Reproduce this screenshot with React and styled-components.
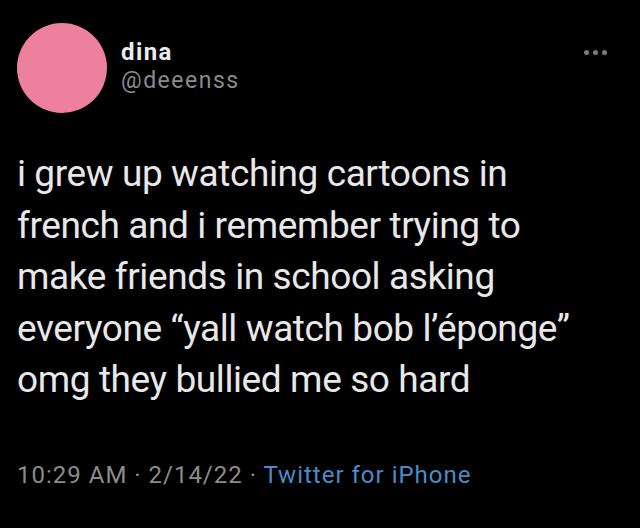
import styled, { createGlobalStyle } from 'styled-components';

const Global = createGlobalStyle`
    html, body {
        margin: 0;
        padding: 0;
        background: #000;
    }
`;

const Tweet = styled.article`
    width: 640px;
    height: 528px;
    box-sizing: border-box;
    background-color: #000;
    padding: 23px 24px 0 17px;
    font-family: Roboto, "Liberation Sans", sans-serif;
    color: #e6e6e6;
`;

const Header = styled.header`
    display: flex;
    align-items: flex-start;
`;

const Avatar = styled.div`
    width: 90px;
    height: 90px;
    border-radius: 50%;
    background-color: #ee809f;
    flex-shrink: 0;
`;

const Names = styled.div`
    display: flex;
    flex-direction: column;
    margin-left: 14px;
    padding-top: 16px;
    flex: 1;
`;

const Name = styled.div`
    font-size: 24px;
    font-weight: 700;
    line-height: 27px;
    letter-spacing: 1.4px;
    color: #ececec;
`;

const Handle = styled.div`
    font-size: 23px;
    line-height: 30px;
    letter-spacing: 1.5px;
    color: #8b8b8b;
`;

const More = styled.div`
    display: flex;
    gap: 4px;
    padding-top: 27px;
    padding-right: 9px;
`;

const Dot = styled.span`
    width: 5px;
    height: 5px;
    border-radius: 50%;
    background-color: #7a7a7a;
`;

const Body = styled.p`
    margin: 35px 0 0;
    font-size: 37px;
    line-height: 51.5px;
    letter-spacing: -0.4px;
    color: #e8e8e8;
`;

const Meta = styled.footer`
    margin-top: 55px;
    font-size: 24px;
    letter-spacing: 1px;
    color: #8b8b8b;
`;

const Source = styled.span`
    color: #4a8cc9;
`;

export default function App() {
    return (
        <>
            <Global />
            <Tweet>
                <Header>
                    <Avatar />
                    <Names>
                        <Name>dina</Name>
                        <Handle>@deeenss</Handle>
                    </Names>
                    <More>
                        <Dot />
                        <Dot />
                        <Dot />
                    </More>
                </Header>
                <Body>
                    i grew up watching cartoons in<br />
                    french and i remember trying to<br />
                    make friends in school asking<br />
                    everyone “yall watch bob l’éponge”<br />
                    omg they bullied me so hard
                </Body>
                <Meta>
                    10:29 AM · 2/14/22 · <Source>Twitter for iPhone</Source>
                </Meta>
            </Tweet>
        </>
    );
}
